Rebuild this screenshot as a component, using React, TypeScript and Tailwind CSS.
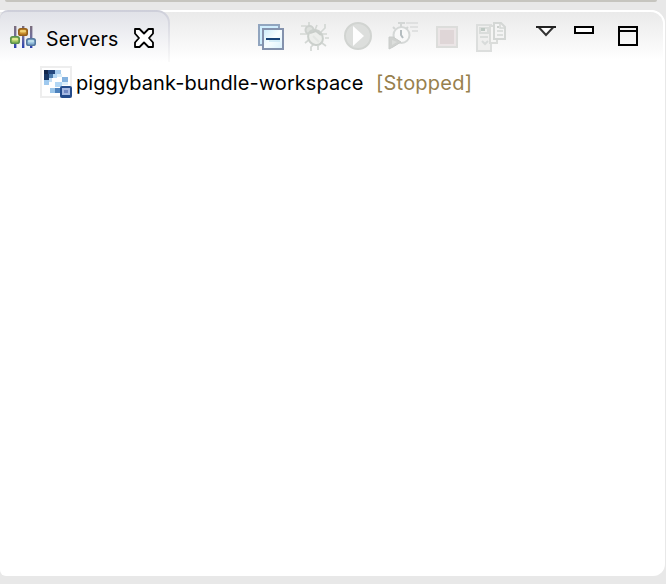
import React from "react";

const Icon = ({ x, y = 21, w = 32, h = 32, className = "", children }: {
  x: number; y?: number; w?: number; h?: number; className?: string; children: React.ReactNode;
}) => (
  <svg viewBox={`${x} ${y} ${w} ${h}`} width={w} height={h} fill="none" className={`shrink-0 ${className}`}>
    {children}
  </svg>
);

const Knob = ({ x, y, edge, fill, light }: { x: number; y: number; edge: string; fill: string; light: string }) => (
  <g>
    <rect x={x} y={y} width="10" height="8" rx="2.6" fill={edge} />
    <rect x={x + 1.5} y={y + 1.5} width="7" height="5" rx="1.5" fill={fill} />
    <rect x={x + 2} y={y + 2} width="6" height="2.4" rx="1" fill={light} />
  </g>
);

const ServersIcon = () => (
  <Icon x={8} y={24} w={30} h={26}>
    <defs>
      <linearGradient id="rail" x1="0" y1="26" x2="0" y2="48" gradientUnits="userSpaceOnUse">
        <stop stopColor="#7b6d7c" />
        <stop offset=".5" stopColor="#706e9c" />
        <stop offset="1" stopColor="#2940b0" />
      </linearGradient>
    </defs>
    <rect x="14" y="26" width="2.4" height="22" fill="url(#rail)" />
    <rect x="22" y="26" width="2.4" height="22" fill="url(#rail)" />
    <rect x="30" y="26" width="2.4" height="22" fill="url(#rail)" />
    <Knob x={10} y={36} edge="#5b914d" fill="#9bc360" light="#e0e78f" />
    <Knob x={18} y={28} edge="#95601c" fill="#c98d2a" light="#f0cf70" />
    <Knob x={26} y={38} edge="#56799f" fill="#8bb5d6" light="#bcdde9" />
  </Icon>
);

const cells: [number, number, number, number, string][] = [
  [44, 70, 4, 4, "#11264b"], [48, 70, 7, 4, "#24487e"], [55, 70, 6, 4, "#a8cdee"],
  [44, 74, 5, 6, "#173765"], [49, 74, 4, 4, "#4b7cae"], [53, 74, 4, 4, "#b8daf5"],
  [44, 80, 5, 5, "#9fc9ee"], [49, 78, 3, 4, "#c5e0f5"],
  [57, 74, 5, 3, "#d9edf9"], [62, 77, 6, 5, "#84b2df"], [55, 82, 7, 5, "#b2d7f5"],
  [62, 82, 6, 3, "#dceefa"], [50, 88, 5, 5, "#9ac5e9"], [55, 88, 5, 5, "#4d82bd"],
];

const WorkspaceIcon = () => (
  <Icon x={40} y={66} w={32} h={32}>
    <rect x="41" y="67" width="30" height="30" fill="#fff" stroke="#eeeeee" strokeWidth="2" />
    {cells.map(([x, y, w, h, c]) => <rect key={`${x}-${y}`} x={x} y={y} width={w} height={h} fill={c} />)}
    <rect x="60" y="86" width="12" height="12" rx="2" fill="#244b8b" />
    <rect x="62" y="88" width="8" height="7" fill="#a6b9e2" />
    <path d="M64 90h4v3h-4z" fill="#7188c2" />
  </Icon>
);

const CollapseIcon = () => (
  <Icon x={256} className="ml-[86px]">
    <defs>
      <linearGradient id="page" x1="262" y1="28" x2="284" y2="50" gradientUnits="userSpaceOnUse">
        <stop stopColor="#c5e9fa" /><stop offset=".5" stopColor="#f7fdff" /><stop offset="1" stopColor="#d5f0fc" />
      </linearGradient>
    </defs>
    <rect x="259" y="25" width="20" height="20" fill="#cfeefe" stroke="#91a5bf" strokeWidth="2" />
    <rect x="263" y="29" width="20" height="20" fill="url(#page)" stroke="#8492ad" strokeWidth="2" />
    <path d="M266 39h14" stroke="#174276" strokeWidth="2" />
    <path d="M269 41h11" stroke="#b6def1" />
  </Icon>
);

const DebugIcon = () => (
  <Icon x={299} className="ml-[11px]">
    <g stroke="#d3d7d4" strokeWidth="1.7">
      <path d="M309 22v5M317 25l-2 5M301 26h5l2 2M300 34h9M305 43l5-4M311 51v-4l3-3M325 24v4l-4 4M321 34h6M325 38h4M322 43l4 3M318 46v4" />
    </g>
    <circle cx="309.5" cy="30" r="4" fill="#dde0dd" stroke="#cdd1ce" strokeWidth="2" />
    <ellipse cx="315.5" cy="37.5" rx="7" ry="8" transform="rotate(-40 315.5 37.5)" fill="#eceeeb" stroke="#cbd0cc" strokeWidth="2" />
    <path d="m310 33 6-2 5 4" stroke="#c8cdc9" strokeWidth="2" />
    <path d="m313 36 6 6" stroke="#e3e6e3" strokeWidth="2" />
  </Icon>
);

const RunIcon = () => (
  <Icon x={342} className="ml-[11px]">
    <circle cx="358" cy="36" r="13" fill="#dcdedc" stroke="#d1d4d1" strokeWidth="2" />
    <path d="M353 26v20l11-10z" fill="#fdfdfd" />
  </Icon>
);

const ProfileIcon = () => (
  <Icon x={387} className="ml-[13px]">
    <circle cx="401.5" cy="35" r="8" fill="#f8f8f8" stroke="#d5d8d7" strokeWidth="2" />
    <path d="M398 23h7M401 23v4M393 27l2 2M408 27l-2 2" stroke="#d3d6d5" strokeWidth="2" />
    <path d="M401 30v5l2 3" stroke="#b5bdc0" strokeWidth="2" />
    <path d="M406 23h12M410 27h8M412 31h6" stroke="#dadcdb" strokeWidth="1.5" />
    <path d="M389 37v12l4-2 8-5-8-5z" fill="#d0d2d0" stroke="#c9ccca" />
    <path d="M392 40v5l5-3z" fill="#dcdedc" />
  </Icon>
);

const StopIcon = () => (
  <Icon x={432} className="ml-[13px]">
    <rect x="437" y="27" width="20" height="20" fill="#ebe8e8" stroke="#dcdddb" strokeWidth="2" />
    <rect x="439" y="29" width="16" height="16" fill="#dfd6d7" stroke="#ebe5e6" strokeWidth="2" />
  </Icon>
);

const PublishIcon = () => (
  <Icon x={475} className="ml-[11px]">
    <rect x="477" y="25" width="14" height="26" fill="#efefee" stroke="#dcdedd" strokeWidth="2" />
    <path d="M480 28h8v5h-8zM480 37h8" stroke="#dadddb" strokeWidth="2" />
    <rect x="481" y="28" width="4" height="3" fill="#bec9c3" />
    <path d="m482 41 3 3 3-3" stroke="#d8dbda" strokeWidth="2" />
    <path d="M490 26h7v17h-7z" fill="#f5f5f4" stroke="#dadcda" strokeWidth="2" />
    <path d="M494 23h7l4 4v12h-11z" fill="#f4f4f4" stroke="#d4d7d5" strokeWidth="2" />
    <path d="M500 23v5h5M497 31h6M497 35h6" stroke="#d4d7d5" strokeWidth="1.5" />
    <path d="M497 27h2" stroke="#ccd0cd" strokeWidth="2" />
  </Icon>
);

export default function App() {
  return (
    <div className="h-[584px] w-[666px] overflow-hidden bg-[#e8e8e8] font-['Inter','Noto_Sans',sans-serif] text-[20px] text-black">
      <div className="ml-[5px] h-[2px] w-[652px] rounded-b-[2px] bg-[#c6c5bf]" />
      <main className="mt-[8px] h-[566px] w-[665px] overflow-hidden rounded-bl-[6px] rounded-br-[12px] rounded-tr-[14px] bg-white">
        <header className="flex h-[50px] items-start rounded-tr-[14px] border-r-2 border-t-2 border-r-white border-t-white bg-linear-to-b from-[#eaeaea] to-white">
          <div className="-mt-[2px] h-[52px] w-[170px] shrink-0 rounded-tl-[8px] rounded-tr-[13px] bg-linear-to-b from-[#cdced9] to-[#fafafa] pr-[2px] pt-[2px]">
            <div className="flex h-[50px] items-start rounded-tl-[7px] rounded-tr-[11px] bg-linear-to-b from-[#e1e2e8] to-white">
              <div className="ml-[8px] mt-[12px]"><ServersIcon /></div>
              <h1 className="ml-[8px] mt-[12px] w-[76px] whitespace-nowrap text-[19.5px] leading-[30px] tracking-[0.2px]">Servers</h1>
              <Icon x={132} y={26} w={24} h={24} className="ml-[10px] mt-[14px]">
                <path d="M135 29h4.5l4.5 4.5 4.5-4.5h4.5v4.5l-4 4.5 4 4.5v4.5h-4.5l-4.5-4.5-4.5 4.5h-4.5v-4.5l4-4.5-4-4.5z" fill="white" stroke="black" strokeWidth="1.8" strokeLinejoin="round" />
              </Icon>
            </div>
          </div>
          <div className="mt-[9px] flex shrink-0">
            <CollapseIcon /><DebugIcon /><RunIcon /><ProfileIcon /><StopIcon /><PublishIcon />
            <Icon x={532} w={28} className="ml-[25px]">
              <path d="M538.5 27h15l-7.5 8z" fill="white" stroke="#333" strokeWidth="2" />
              <path d="M536 27h20" stroke="#222" strokeWidth="2" />
            </Icon>
            <Icon x={572} w={24} className="ml-[12px]">
              <rect x="575" y="27" width="18" height="6" fill="white" stroke="black" strokeWidth="2" />
            </Icon>
            <Icon x={616} w={24} className="ml-[20px]">
              <rect x="619" y="27" width="18" height="18" stroke="black" strokeWidth="2" />
              <path d="M618 31h20" stroke="black" strokeWidth="2" />
            </Icon>
          </div>
        </header>
        <div className="ml-[40px] mt-[6px] flex h-[32px] items-start whitespace-nowrap">
          <WorkspaceIcon />
          <span className="ml-[4px] w-[300px] shrink-0 pt-[1px] leading-[32px] tracking-[0.07px]">piggybank-bundle-workspace</span>
          <span className="pt-[1px] leading-[32px] tracking-[0.22px] text-[#97804d]">[Stopped]</span>
        </div>
      </main>
    </div>
  );
}
